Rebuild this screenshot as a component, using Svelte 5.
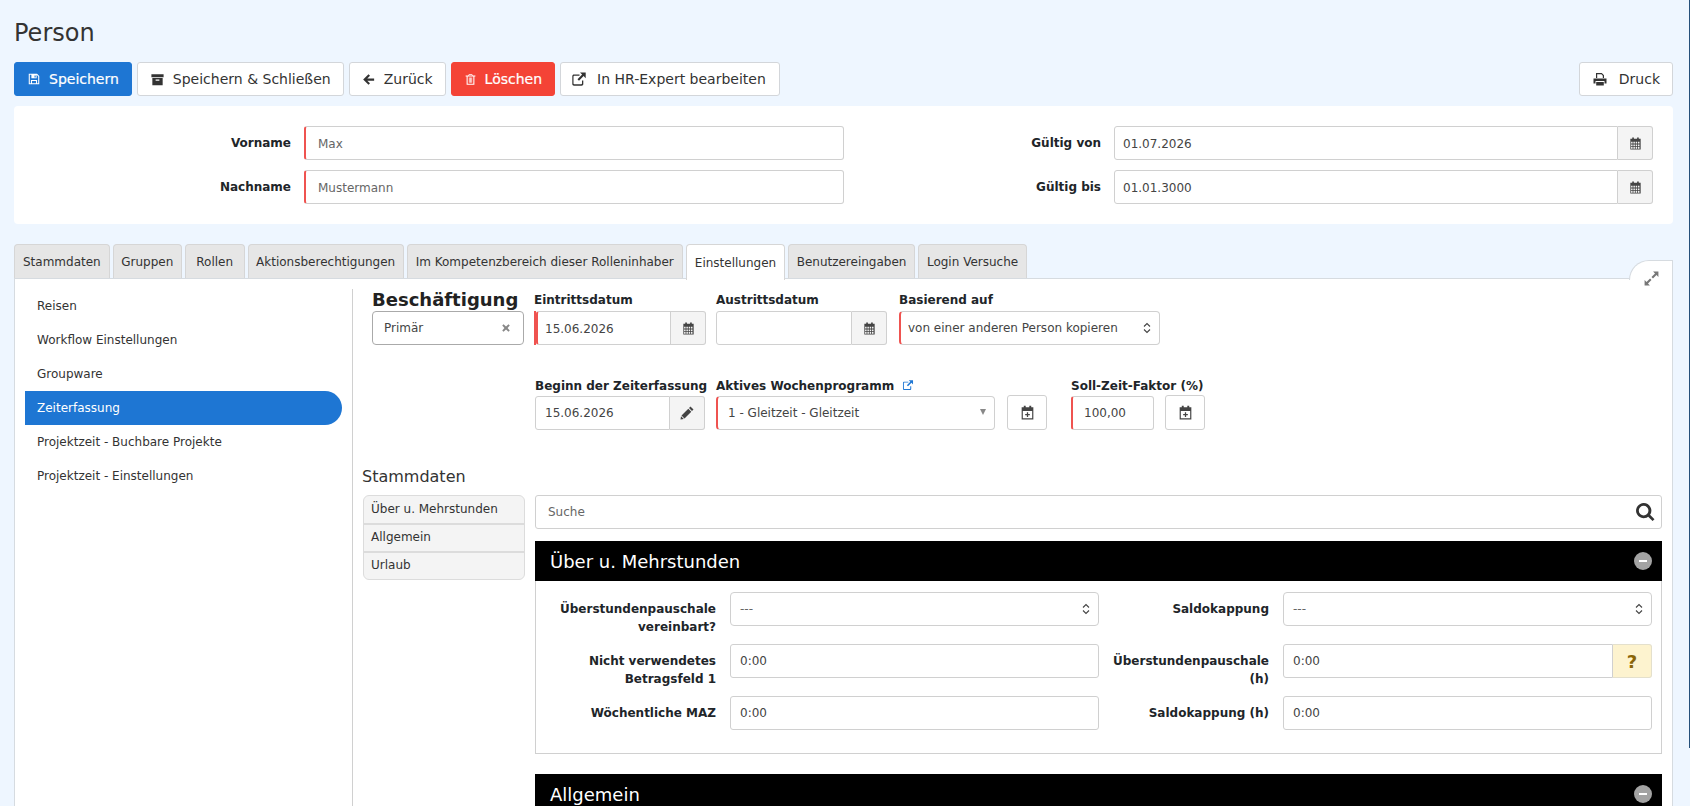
<script>
  // 4 x 3 grid of little cells, cut out of the calendar icon
  let cells = '';
  for (let r = 0; r < 3; r++) {
    for (let c = 0; c < 4; c++) {
      cells += `M${3.3 + c * 2.45} ${6.2 + r * 2.75}h1.6v1.9h-1.6z`;
    }
  }

  const icons = {
    save: 'M2 2h9.5L14 4.5V14H2zM3.2 3.2v9.6h1.3V9h7v3.8h1.3V5L11 3.2V7H5V3.2zM5.7 10.2v2.6h4.6v-2.6zM8.6 3.9h1.3v2.4H8.6z',
    archive: 'M1.5 2.5h13v3h-13zM2.5 6.5h11V14h-11zM6 8v1.3h4V8z',
    back: 'M8 2.5l1.6 1.6L6.7 7H14v2.2H6.7l2.9 2.9L8 13.7 2.3 8z',
    trash: 'M6 1.5h4l.8 1.5H14v1.3h-1.2v10.2H3.2V4.3H2V3h3.2zM6.4 2.6l-.2.4h3.6l-.2-.4zM4.5 4.3v9h7v-9zM6 5.5h.9V12H6zM7.55 5.5h.9V12h-.9zM9.1 5.5h.9V12h-.9z',
    external: 'M3 3.5h5.5v1.3H3.3c-.5 0-.8.3-.8.8v6.9c0 .5.3.8.8.8h6.9c.5 0 .8-.3.8-.8V9.5h1.3V13c0 1-.7 1.7-1.7 1.7H3C2 14.7 1.3 14 1.3 13V5.2C1.3 4.2 2 3.5 3 3.5zM9 1.5h5.7v5.7l-2.1-2.1L8 9.7 6.5 8.2l4.6-4.6z',
    print: 'M4 2h5.8L12 4.2V7h-1.2V4.8L9.4 3.2H5.2V7H4zM1.5 7.4h13v5.1h-2V10h-9v2.5h-2zM4.2 11h7.6v3.5H4.2z',
    calendar: 'M2.5 3h2V1.6h1.8V3h3.4V1.6h1.8V3h2v11.5h-11z' + cells,
    calendarPlus: 'M2.5 3h2V1.6h1.8V3h3.4V1.6h1.8V3h2v11.5h-11zM3.6 6.5v6.9h8.8V6.5zM7.4 7.8h1.2v1.6h1.6v1.2H8.6v1.6H7.4v-1.6H5.8V9.4h1.6z',
    pencil: 'M11.5 1.5l3 3L13 6l-3-3zM9.3 3.7l3 3-6.8 6.8-3-3zM2 11.2L4.8 14 1.5 14.5z',
    search: 'M7 1.5a5.5 5.5 0 1 0 3.3 9.9l3.2 3.2 1.4-1.4-3.2-3.2A5.5 5.5 0 0 0 7 1.5zM7 3.5a3.5 3.5 0 1 1 0 7 3.5 3.5 0 0 1 0-7z',
    expand: 'M9.5 1.5h5v5l-1.8-1.8L9.4 8 8 6.6l3.3-3.3zM6.5 14.5h-5v-5l1.8 1.8L6.6 8 8 9.4l-3.3 3.3z',
    close: 'M4 2L8 5.5 12 2l2 2-3.5 4 3.5 4-2 2-4-3.5L4 14l-2-2 3.5-4L2 4z'
  };

  const tabs = [
    'Stammdaten',
    'Gruppen',
    'Rollen',
    'Aktionsberechtigungen',
    'Im Kompetenzbereich dieser Rolleninhaber',
    'Einstellungen',
    'Benutzereingaben',
    'Login Versuche'
  ];
  const activeTab = 'Einstellungen';

  const navItems = [
    'Reisen',
    'Workflow Einstellungen',
    'Groupware',
    'Zeiterfassung',
    'Projektzeit - Buchbare Projekte',
    'Projektzeit - Einstellungen'
  ];
  const activeNav = 'Zeiterfassung';
</script>

{#snippet icon(name, size = 14)}
  <svg class="icon" width={size} height={size} viewBox="0 0 16 16" fill="currentColor" fill-rule="evenodd" aria-hidden="true">
    <path d={icons[name]} />
  </svg>
{/snippet}

{#snippet updown()}
  <svg class="updown" width="8" height="12" viewBox="0 0 8 12" fill="none" stroke="#444" stroke-width="1.1" aria-hidden="true">
    <path d="M1 4.5L4 1.5 7 4.5M1 7.5L4 10.5 7 7.5" />
  </svg>
{/snippet}

{#snippet dateField(value, cls = '', addon = 'calendar')}
  <div class="group {cls}">
    <input class="control" {value} />
    <span class="addon">{@render icon(addon, addon === 'pencil' ? 16 : 15)}</span>
  </div>
{/snippet}

{#snippet sectionHead(title)}
  <div class="section-head">
    <span>{title}</span>
    <span class="collapse"></span>
  </div>
{/snippet}

<div class="page">
  <div class="main">
    <h1>Person</h1>

    <div class="toolbar">
      <button class="btn primary">{@render icon('save')} Speichern</button>
      <button class="btn">{@render icon('archive', 15)} Speichern &amp; Schließen</button>
      <button class="btn back">{@render icon('back', 15)} Zurück</button>
      <button class="btn danger">{@render icon('trash', 13)} Löschen</button>
      <button class="btn hr">{@render icon('external', 16)} In HR-Expert bearbeiten</button>
      <button class="btn print">{@render icon('print', 16)} Druck</button>
    </div>

    <div class="head-card">
      <div class="lbl">Vorname</div>
      <input class="control req muted" value="Max" />
      <div class="lbl">Gültig von</div>
      {@render dateField('01.07.2026')}
      <div class="lbl">Nachname</div>
      <input class="control req muted" value="Mustermann" />
      <div class="lbl">Gültig bis</div>
      {@render dateField('01.01.3000')}
    </div>

    <div class="tabs">
      {#each tabs as tab (tab)}
        <div class="tab" class:active={tab === activeTab}>{tab}</div>
      {/each}
    </div>

    <div class="panel">
      <button class="expand" aria-label="Vollbild">{@render icon('expand', 17)}</button>

      <nav class="side">
        {#each navItems as item (item)}
          <div class="nav-item" class:active={item === activeNav}>{item}</div>
        {/each}
      </nav>

      <div class="content">
        <div class="row-one">
          <div class="field f-job">
            <div class="job-title">Beschäftigung</div>
            <div class="job-select">
              <span>Primär</span>
              <span class="job-x">{@render icon('close', 10)}</span>
            </div>
          </div>
          <div class="field f-entry">
            <div class="fld-label">Eintrittsdatum</div>
            {@render dateField('15.06.2026', 'req')}
          </div>
          <div class="field f-exit">
            <div class="fld-label">Austrittsdatum</div>
            {@render dateField('')}
          </div>
          <div class="field f-base">
            <div class="fld-label">Basierend auf</div>
            <div class="select req">
              <span>von einer anderen Person kopieren</span>
              {@render updown()}
            </div>
          </div>
        </div>

        <div class="row-two">
          <div class="field f-start">
            <div class="fld-label">Beginn der Zeiterfassung</div>
            {@render dateField('15.06.2026', '', 'pencil')}
          </div>
          <div class="field f-week">
            <div class="fld-label">Aktives Wochenprogramm <span class="link">{@render icon('external', 12)}</span></div>
            <div class="select req">
              <span>1 - Gleitzeit - Gleitzeit</span>
              <span class="caret"></span>
            </div>
          </div>
          <button class="cal-btn week-btn" aria-label="Neu">{@render icon('calendarPlus', 17)}</button>
          <div class="field f-factor">
            <div class="fld-label nowrap">Soll-Zeit-Faktor (%)</div>
            <input class="control req factor" value="100,00" />
          </div>
          <button class="cal-btn factor-btn" aria-label="Neu">{@render icon('calendarPlus', 17)}</button>
        </div>

        <h2>Stammdaten</h2>

        <div class="master">
          <div class="sub-tabs">
            <div class="sub-tab">Über u. Mehrstunden</div>
            <div class="sub-tab">Allgemein</div>
            <div class="sub-tab">Urlaub</div>
          </div>

          <div class="master-main">
            <div class="search">
              <input placeholder="Suche" />
              {@render icon('search', 22)}
            </div>

            {@render sectionHead('Über u. Mehrstunden')}
            <div class="section-body">
              <div class="lbl wrap">Überstundenpauschale vereinbart?</div>
              <div class="select"><span class="dash">---</span>{@render updown()}</div>
              <div class="lbl wrap">Saldokappung</div>
              <div class="select"><span class="dash">---</span>{@render updown()}</div>

              <div class="lbl wrap">Nicht verwendetes Betragsfeld 1</div>
              <input class="control" value="0:00" />
              <div class="lbl wrap">Überstundenpauschale (h)</div>
              <div class="group">
                <input class="control" value="0:00" />
                <span class="help">?</span>
              </div>

              <div class="lbl wrap">Wöchentliche MAZ</div>
              <input class="control" value="0:00" />
              <div class="lbl wrap">Saldokappung (h)</div>
              <input class="control" value="0:00" />
            </div>

            <div class="next-head">{@render sectionHead('Allgemein')}</div>
          </div>
        </div>
      </div>
    </div>
  </div>
  <div class="edge"></div>
</div>

<style>
  :global(body) {
    margin: 0;
    background: #eef6ff;
  }

  .page {
    display: flex;
    justify-content: space-between;
    align-items: flex-start;
    height: 806px;
    overflow: hidden;
    padding-left: 14px;
    box-sizing: border-box;
    font-family: 'DejaVu Sans', sans-serif;
    font-size: 12px;
    color: #333;
  }

  .main {
    width: 1659px;
    flex: none;
  }

  .edge {
    width: 1px;
    height: 748px;
    background: #25507a;
  }

  .icon {
    flex: none;
    display: block;
  }

  h1 {
    margin: 0;
    padding-top: 18px;
    height: 62px;
    box-sizing: border-box;
    font-size: 24px;
    line-height: 31px;
    font-weight: 400;
    color: #333;
  }

  .toolbar {
    display: flex;
    gap: 5px;
    height: 34px;
    margin-bottom: 10px;
  }

  .btn {
    display: flex;
    align-items: center;
    gap: 8px;
    height: 34px;
    padding: 0 12px;
    background: #fff;
    border: 1px solid #d3d6da;
    border-radius: 3px;
    font: inherit;
    font-size: 14px;
    color: #333;
  }

  .btn.back {
    padding-left: 11px;
    gap: 8px;
  }

  .btn.hr {
    padding: 0 13px 0 10px;
    gap: 10px;
  }

  .btn.primary {
    background: #1e76d3;
    border-color: #1e76d3;
    color: #fff;
    font-weight: 500;
    -webkit-text-stroke: 0.2px #fff;
  }

  .btn.danger {
    background: #f44336;
    border-color: #f44336;
    color: #fff;
    -webkit-text-stroke: 0.2px #fff;
  }

  .btn.print {
    margin-left: auto;
    gap: 11px;
  }

  .head-card {
    display: grid;
    grid-template-columns: 277px 540px 244px 539px;
    grid-auto-rows: 34px;
    column-gap: 13px;
    row-gap: 10px;
    padding: 20px;
    padding-left: 0;
    background: #fff;
    border-radius: 4px;
    margin-bottom: 20px;
  }

  .lbl {
    align-self: center;
    text-align: right;
    font-weight: 700;
    font-size: 12px;
    color: #212529;
  }

  .lbl.wrap {
    align-self: start;
    padding-top: 8px;
    line-height: 18px;
  }

  .control {
    width: 100%;
    height: 34px;
    box-sizing: border-box;
    padding: 0 9px;
    background: #fff;
    border: 1px solid #d0d0d0;
    border-radius: 3px;
    font: inherit;
    font-size: 12px;
    color: #444;
    outline: none;
  }

  .head-card .control {
    padding: 2px 12px 0;
  }

  .muted {
    color: #666;
  }

  .group {
    display: flex;
    height: 34px;
    min-width: 0;
  }

  .group .control {
    flex: 1;
    min-width: 0;
    border-radius: 3px 0 0 3px;
  }

  .head-card .group .control {
    padding: 2px 8px 0;
  }

  .group.req .control {
    padding: 2px 7px 0;
  }

  .addon {
    flex: none;
    display: flex;
    align-items: center;
    justify-content: center;
    width: 34px;
    background: #f4f4f4;
    border: 1px solid #d0d0d0;
    border-left: none;
    border-radius: 0 3px 3px 0;
    color: #444;
  }

  .help {
    flex: none;
    display: flex;
    align-items: center;
    justify-content: center;
    width: 39px;
    box-sizing: border-box;
    background: #fdf3cf;
    border: 1px solid #e4e0cc;
    border-left: none;
    border-radius: 0 3px 3px 0;
    color: #8a6508;
    font-size: 18px;
    font-weight: 700;
  }

  .tabs {
    display: flex;
    gap: 3px;
    height: 34px;
  }

  .tab {
    display: flex;
    align-items: center;
    justify-content: center;
    padding: 0 8px;
    background: #e6e6e6;
    border: 1px solid #d6d6d6;
    border-bottom: none;
    border-radius: 4px 4px 0 0;
    font-size: 12px;
    color: #333;
  }

  .tab:nth-child(2),
  .tab:nth-child(4),
  .tab:nth-child(7) {
    padding: 0 7.5px;
  }

  .tab:nth-child(3) {
    padding: 0 10.5px;
  }

  .tab.active {
    position: relative;
    z-index: 1;
    height: 35px;
    background: #fff;
  }

  .panel {
    position: relative;
    display: flex;
    height: 600px;
    background: #fff;
    border: 1px solid #d6dbe0;
    box-sizing: border-box;
  }

  .expand {
    position: absolute;
    top: -19px;
    right: -1px;
    width: 44px;
    height: 20px;
    padding: 0;
    background: #fff;
    border: 1px solid #d6dbe0;
    border-bottom: none;
    border-radius: 22px 0 0 0;
    color: #777;
  }

  .expand .icon {
    position: absolute;
    left: 13px;
    top: 9px;
  }

  .side {
    flex: none;
    width: 338px;
    box-sizing: border-box;
    padding: 0 0 0 10px;
    border-right: 1px solid #d0d0d0;
    margin-top: 10px;
  }

  .nav-item {
    display: flex;
    align-items: center;
    width: 317px;
    height: 34px;
    padding-left: 12px;
    box-sizing: border-box;
    font-size: 12px;
    color: #333;
  }

  .nav-item.active {
    background: #1e76d3;
    color: #fff;
    border-radius: 0 17px 17px 0;
  }

  .content {
    flex: 1;
    min-width: 0;
    padding: 10px 10px 0 9px;
  }

  .row-one,
  .row-two {
    display: flex;
    align-items: flex-end;
  }

  .row-one {
    padding-left: 10px;
    height: 56px;
  }

  .row-two {
    padding-left: 173px;
    margin-top: 30px;
    height: 55px;
  }

  .field {
    flex: none;
  }

  .f-job { width: 152px; margin-right: 10px; }
  .f-entry { width: 172px; margin-right: 10px; }
  .f-exit { width: 171px; margin-right: 12px; }
  .f-base { width: 261px; }
  .f-start { width: 170px; margin-right: 11px; }
  .f-week { width: 279px; margin-right: 12px; }
  .f-factor { width: 83px; margin-right: 11px; margin-left: 24px; }

  .job-title {
    font-size: 18px;
    line-height: 22px;
    font-weight: 700;
    color: #222;
    white-space: nowrap;
  }

  .job-select {
    display: flex;
    align-items: center;
    justify-content: space-between;
    height: 34px;
    box-sizing: border-box;
    padding: 0 12px 0 11px;
    border: 1px solid #aaa;
    border-radius: 4px;
    font-size: 12px;
    color: #444;
  }

  .job-x {
    color: #888;
  }

  .fld-label {
    height: 22px;
    line-height: 22px;
    font-size: 12px;
    font-weight: 700;
    color: #212529;
    white-space: nowrap;
  }

  .row-two .fld-label {
    line-height: 24px;
  }

  .nowrap {
    white-space: nowrap;
  }

  .link {
    display: inline-block;
    margin-left: 4px;
    color: #1e76d3;
    vertical-align: -1px;
  }

  .select {
    display: flex;
    align-items: center;
    justify-content: space-between;
    height: 34px;
    box-sizing: border-box;
    padding: 0 8px 0 9px;
    background: #fff;
    border: 1px solid #d0d0d0;
    border-radius: 4px;
    font-size: 12px;
    color: #444;
  }

  .select .updown {
    flex: none;
  }

  .f-base .select {
    padding-left: 7px;
  }

  .dash {
    color: #666;
  }

  .caret {
    width: 0;
    height: 0;
    border-left: 3.5px solid transparent;
    border-right: 3.5px solid transparent;
    border-top: 6px solid #888;
    margin-bottom: 2px;
  }

  .f-week .select {
    padding-left: 10px;
  }

  .control.factor {
    padding: 0 11px;
  }

  .req,
  .group.req .control {
    border-left: 2px solid #ef5350;
  }

  .cal-btn {
    flex: none;
    display: flex;
    align-items: center;
    justify-content: center;
    width: 40px;
    height: 35px;
    padding: 0;
    background: #fff;
    border: 1px solid #d0d0d0;
    border-radius: 3px;
    color: #444;
  }

  h2 {
    margin: 36px 0 7px;
    font-size: 16px;
    line-height: 22px;
    font-weight: 400;
    color: #333;
  }

  .master {
    display: flex;
    align-items: flex-start;
    gap: 10px;
    margin-left: 1px;
  }

  .sub-tabs {
    flex: none;
    width: 162px;
    box-sizing: border-box;
    padding-top: 1px;
    background: #f4f4f4;
    border: 1px solid #dcdcdc;
    border-radius: 6px;
    overflow: hidden;
  }

  .sub-tab {
    height: 26px;
    line-height: 24px;
    padding-left: 7px;
    font-size: 12px;
    color: #333;
    border-bottom: 2px solid #dcdcdc;
  }

  .sub-tab:last-child {
    border-bottom: none;
  }

  .master-main {
    flex: 1;
    min-width: 0;
  }

  .search {
    display: flex;
    align-items: center;
    height: 34px;
    box-sizing: border-box;
    padding: 0 5px 0 12px;
    border: 1px solid #d0d0d0;
    border-radius: 3px;
    margin-bottom: 12px;
    color: #333;
  }

  .search input {
    flex: 1;
    min-width: 0;
    border: none;
    outline: none;
    padding: 0;
    font: inherit;
    font-size: 12px;
    color: #666;
  }

  .search input::placeholder {
    color: #666;
    opacity: 1;
  }

  .section-head {
    display: flex;
    align-items: center;
    justify-content: space-between;
    height: 40px;
    box-sizing: border-box;
    padding: 0 10px 0 15px;
    background: #000;
    font-size: 18px;
    color: #fff;
  }

  .collapse {
    position: relative;
    width: 18px;
    height: 18px;
    border-radius: 50%;
    background: #a3a3a3;
  }

  .collapse::after {
    content: '';
    position: absolute;
    left: 5px;
    top: 8px;
    width: 8px;
    height: 2px;
    background: #fff;
  }

  .section-body {
    display: grid;
    grid-template-columns: 179px 369px 156px 369px;
    grid-auto-rows: 34px;
    row-gap: 18px;
    column-gap: 14px;
    padding: 11px 9px 23px 1px;
    border: 1px solid #d0d0d0;
    border-top: none;
  }

  .next-head {
    margin-top: 20px;
  }
</style>
